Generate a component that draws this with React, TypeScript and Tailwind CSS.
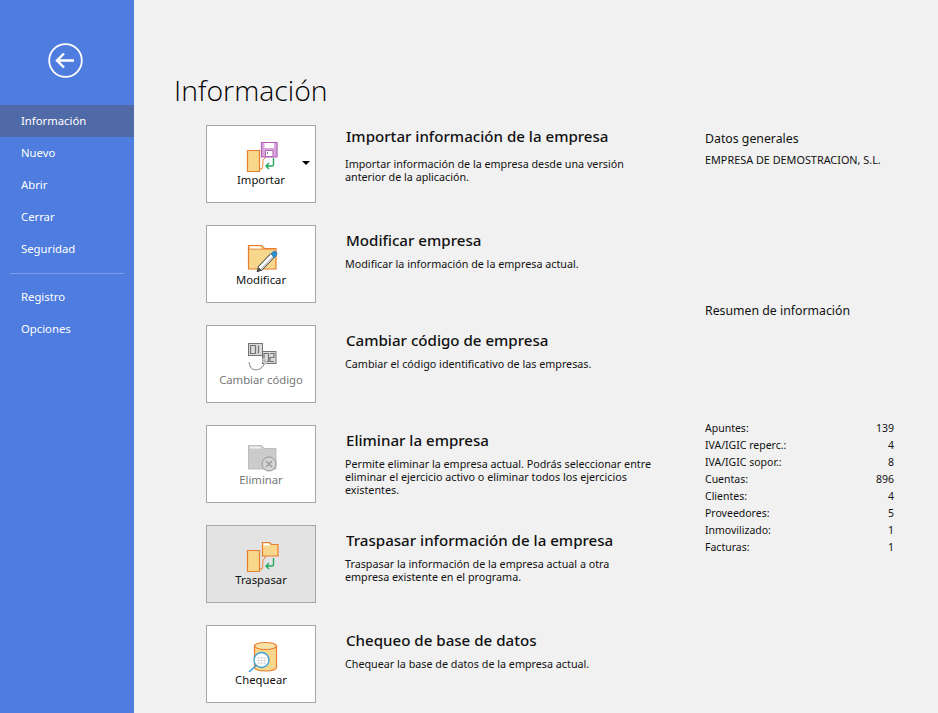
import React from "react";

const O = "#e97d2f";
const Y = "#f6d78b";

function Doc() {
  return (
    <>
      <path d="M6.500 12.500h12v21h-12z" fill={Y} stroke={O} strokeWidth="1.200" />
      <path d="M19 31h2c1-3 1-8 1-9l2-2v-3" fill="none" stroke={O} strokeWidth="1" />
      <path d="M32.500 20v6.500q0 1.500-1.500 1.500h-5.500M28 25l-3 3 3 3" fill="none" stroke="#25a85c" strokeWidth="1.400" />
    </>
  );
}

function IconImport() {
  return (
    <svg width="40" height="34" viewBox="0 0 40 34" className="block">
      <Doc />
      <path d="M20.500 4.500h15.500v14.500h-15.500z" fill="#d9a9dc" stroke="#b35fb8" strokeWidth="1.200" />
      <rect x="23.500" y="5" width="9.500" height="5" fill="#fff" />
      <path d="M24.500 18.500v-6h7.500v6z" fill="#fff" stroke="#b35fb8" />
      <rect x="26" y="14" width="1" height="2" fill="#888" />
    </svg>
  );
}

function IconModify() {
  return (
    <svg width="40" height="34" viewBox="0 0 40 34" className="block">
      <path d="M7.500 9.500V7.500h13l3 3h11.500v20.500h-27.500z" fill={Y} stroke={O} strokeWidth="1.200" />
      <path d="M8 11h26" stroke={O} strokeWidth="1" />
      <path d="M9 8.500h10l2 2H9z" fill="#fff" />
      <path d="M18.500 31l13-13.500" stroke="#4a4a4a" strokeWidth="6" />
      <path d="M18.500 31l13-13.500" stroke="#fff" strokeWidth="4" />
      <path d="M19.500 31.500l12-12.500" stroke="#aab" strokeWidth="1" />
      <path d="M30 15.500l3-2.500 3 1.500-.5 3-2.500 2.500z" fill="#2a8fd0" stroke="#1d6ea6" strokeWidth="0.600" />
      <path d="M15.500 34.500l1.500-5.500 4 3.500z" fill="#444" />
    </svg>
  );
}

function IconCode() {
  const s = "#747474";
  return (
    <svg width="40" height="34" viewBox="0 0 40 34" className="block">
      <rect x="7.500" y="5.500" width="14" height="12" fill="#dadada" stroke={s} />
      <path d="M9.500 7.500h5v8h-5zM17.500 7.500v8" fill="none" stroke={s} strokeWidth="1.200" />
      <rect x="21.500" y="13.500" width="13.500" height="12" fill="#dadada" stroke={s} />
      <path d="M23 15.500h4.500v8h-4.500zM29 15.500h4v4h-4v4h4" fill="none" stroke={s} strokeWidth="1.200" />
      <path d="M8 24q1 8 7 8q5 0 9-7" fill="none" stroke="#9a9a9a" strokeWidth="1.200" />
      <path d="M19.500 21.500l6-1-.5 6z" fill="#b8b8b8" stroke="#fff" strokeWidth="0.500" />
    </svg>
  );
}

function IconDelete() {
  return (
    <svg width="40" height="34" viewBox="0 0 40 34" className="block">
      <path d="M7.500 9V7.500h13l3 3h11.500v20.500h-27.500z" fill="#cbcbcb" stroke="#bdbdbd" />
      <path d="M9 8.500h10l2 2H9z" fill="#f0f0f0" />
      <circle cx="28" cy="26" r="7" fill="#d4d4d4" stroke="#969696" strokeWidth="1" />
      <path d="M25 23l6 6M31 23l-6 6" stroke="#969696" strokeWidth="1.100" />
    </svg>
  );
}

function IconTransfer() {
  return (
    <svg width="40" height="34" viewBox="0 0 40 34" className="block">
      <Doc />
      <path d="M21.500 4.500h7l2 2h6.500v11.500h-15.500z" fill={Y} stroke={O} strokeWidth="1.200" />
      <path d="M22.500 5.500h5l2 2h-7z" fill="#fff" />
    </svg>
  );
}

function IconCheck() {
  return (
    <svg width="40" height="34" viewBox="0 0 40 34" className="block">
      <path d="M13.500 8v21q0 4 11 4t11-4V8z" fill={Y} stroke={O} strokeWidth="1.200" />
      <ellipse cx="24.500" cy="8" rx="11" ry="3.500" fill="#f9e3a8" stroke={O} strokeWidth="1.200" />
      <circle cx="20.500" cy="22" r="7.500" fill="#fff" stroke="#3f9fd8" strokeWidth="1.400" />
      <path d="M16.500 20h8M16.500 22.500h8M16.500 25h8" stroke="#bbb" strokeWidth="1" strokeDasharray="2 1" />
      <path d="M15 27.500l-7 6.500" stroke="#3f9fd8" strokeWidth="1.600" />
    </svg>
  );
}

const rows = [
  {
    label: "Importar",
    icon: <IconImport />,
    title: "Importar información de la empresa",
    desc: ["Importar información de la empresa desde una versión", "anterior de la aplicación."],
    caret: true,
    first: true,
  },
  {
    label: "Modificar",
    icon: <IconModify />,
    title: "Modificar empresa",
    desc: ["Modificar la información de la empresa actual."],
  },
  {
    label: "Cambiar código",
    icon: <IconCode />,
    title: "Cambiar código de empresa",
    desc: ["Cambiar el código identificativo de las empresas."],
    disabled: true,
  },
  {
    label: "Eliminar",
    icon: <IconDelete />,
    title: "Eliminar la empresa",
    desc: [
      "Permite eliminar la empresa actual. Podrás seleccionar entre",
      "eliminar el ejercicio activo o eliminar todos los ejercicios",
      "existentes.",
    ],
    disabled: true,
  },
  {
    label: "Traspasar",
    icon: <IconTransfer />,
    title: "Traspasar información de la empresa",
    desc: ["Traspasar la información de la empresa actual a otra", "empresa existente en el programa."],
    hover: true,
  },
  {
    label: "Chequear",
    icon: <IconCheck />,
    title: "Chequeo de base de datos",
    desc: ["Chequear la base de datos de la empresa actual."],
  },
];

const stats: [string, string][] = [
  ["Apuntes:", "139"],
  ["IVA/IGIC reperc.:", "4"],
  ["IVA/IGIC sopor.:", "8"],
  ["Cuentas:", "896"],
  ["Clientes:", "4"],
  ["Proveedores:", "5"],
  ["Inmovilizado:", "1"],
  ["Facturas:", "1"],
];

const nav1 = ["Nuevo", "Abrir", "Cerrar", "Seguridad"];
const nav2 = ["Registro", "Opciones"];

function NavItem({ text, active }: { text: string; active?: boolean }) {
  return (
    <div className={`h-8 pl-[21px] flex items-center text-[11.300px] text-white ${active ? "bg-[#5069a7]" : ""}`}>{text}</div>
  );
}

export default function App() {
  return (
    <div className="w-[938px] h-[713px] overflow-hidden flex bg-[#f1f1f1] text-[#111] font-['Noto_Sans',sans-serif]">
      <aside className="w-[134px] shrink-0 bg-[#4e7cdf] flex flex-col">
        <div className="h-[105px] pt-[43px] pl-[48px]">
          <svg width="35" height="35" viewBox="0 0 35 35" className="block">
            <circle cx="17.500" cy="17.500" r="16.300" fill="none" stroke="#fff" strokeWidth="1.800" />
            <path d="M9 17.500h17M16 10.500l-7 7 7 7" fill="none" stroke="#fff" strokeWidth="2.400" />
          </svg>
        </div>
        <NavItem text="Información" active />
        {nav1.map((t) => (
          <NavItem key={t} text={t} />
        ))}
        <div className="mx-[10px] mt-2 mb-[7px] h-px bg-[#7d9fe8]" />
        {nav2.map((t) => (
          <NavItem key={t} text={t} />
        ))}
      </aside>
      <main className="flex-1 pl-[40px]">
        <h1 className="h-[125px] pt-[70px] text-[28.400px] leading-[40px] font-['Open_Sans',sans-serif] font-light text-black">
          Información
        </h1>
        <div className="flex">
          <div className="w-[531px] pl-[32px] flex flex-col">
            {rows.map((r) => (
              <div key={r.title} className="h-[100px] flex">
                <div
                  className={`relative w-[110px] h-[78px] border border-[#a6a6a6] flex flex-col items-center pt-[12px] ${
                    r.hover ? "bg-[#e3e3e3]" : "bg-white"
                  }`}
                >
                  {r.icon}
                  <span className={`text-[11.300px] leading-[16px] ${r.disabled ? "text-[#777]" : "text-[#111]"}`}>
                    {r.label}
                  </span>
                  {r.caret && (
                    <span className="absolute left-[95px] top-[35px] w-0 h-0 border-x-[4px] border-x-transparent border-t-[4px] border-t-black" />
                  )}
                </div>
                <div className="pl-[29px]">
                  <div
                    className={`pl-px h-[24px] text-[15.100px] leading-[24px] font-medium text-[#111] ${
                      r.first ? "-mt-px mb-[10px]" : "mt-[3px] mb-[6px]"
                    }`}
                  >
                    {r.title}
                  </div>
                  <div className="text-[10.750px] leading-[13px]">
                    {r.desc.map((d) => (
                      <div key={d}>{d}</div>
                    ))}
                  </div>
                </div>
              </div>
            ))}
          </div>
          <div className="w-[189px]">
            <div className="text-[12.300px] leading-[16px] mt-[6px]">Datos generales</div>
            <div className="text-[10.850px] leading-[14px] mt-[6px]">EMPRESA DE DEMOSTRACION, S.L.</div>
            <div className="text-[12.300px] leading-[16px] mt-[136px]">Resumen de información</div>
            <div className="mt-[101px] flex flex-col text-[10.500px] leading-[17px]">
              {stats.map(([k, v]) => (
                <div key={k} className="flex justify-between">
                  <span>{k}</span>
                  <span>{v}</span>
                </div>
              ))}
            </div>
          </div>
        </div>
      </main>
    </div>
  );
}
